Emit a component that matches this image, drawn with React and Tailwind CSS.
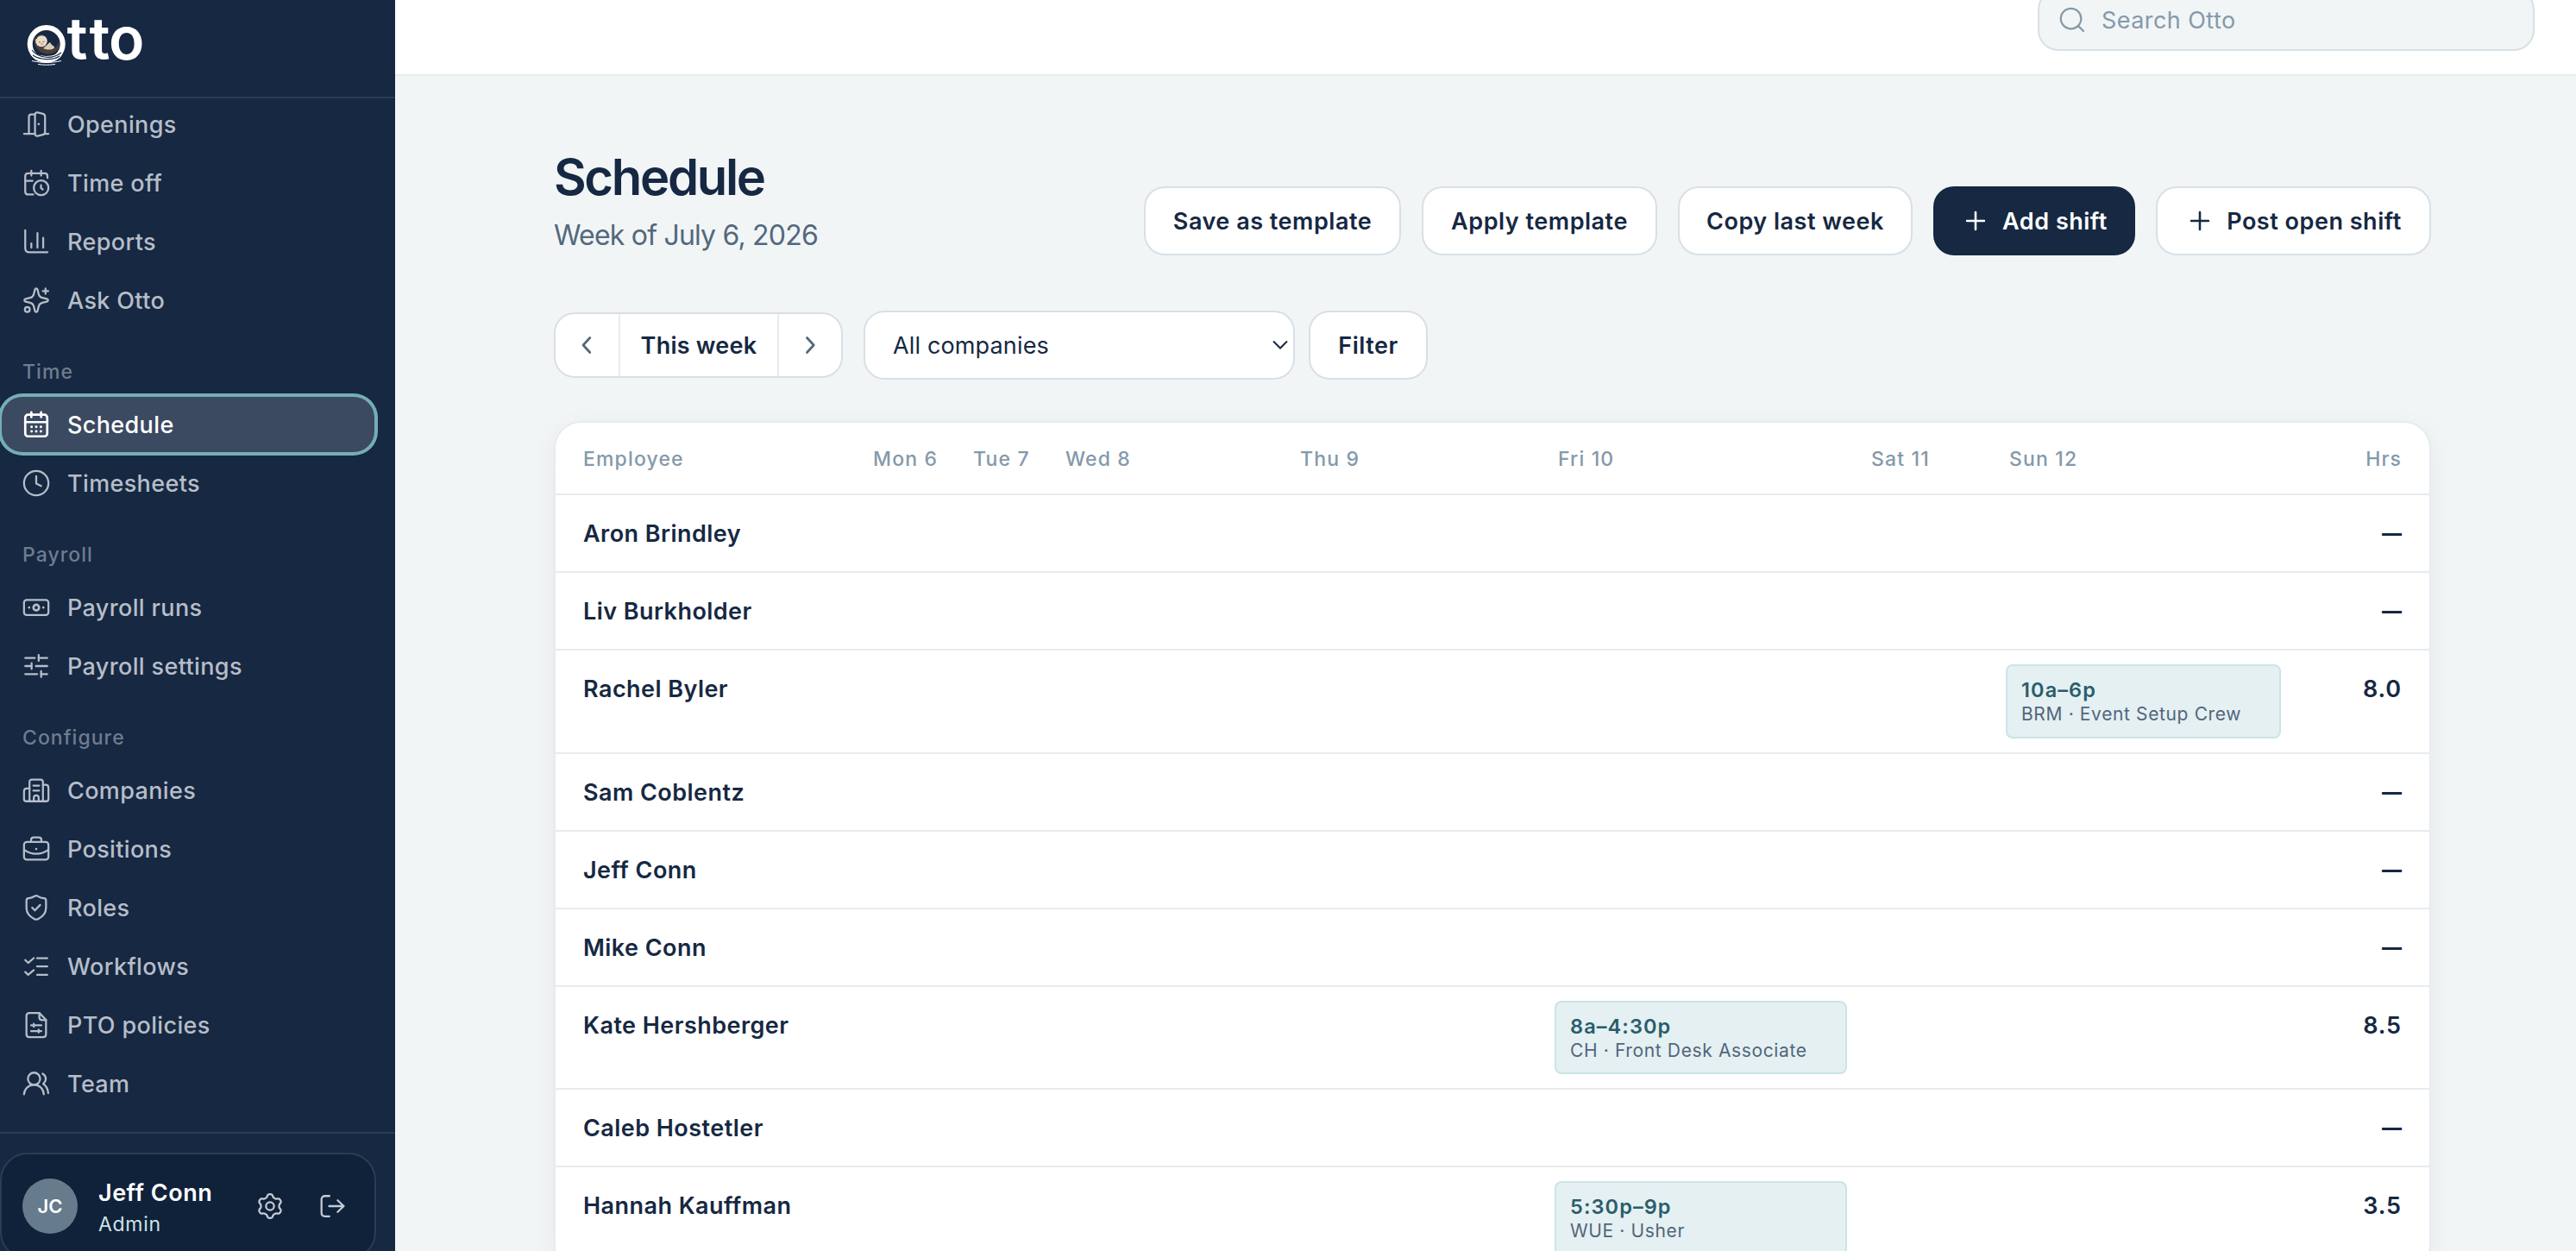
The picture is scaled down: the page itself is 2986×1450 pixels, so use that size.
import React, { useState } from 'react';

const Icon = ({ children, className = 'size-[34px]' }) => (
    <svg
        viewBox="0 0 24 24"
        fill="none"
        stroke="currentColor"
        strokeWidth="1.6"
        strokeLinecap="round"
        strokeLinejoin="round"
        className={`shrink-0 ${className}`}
    >
        {children}
    </svg>
);

// zero length strokes with round caps make the dots
const icons = {
    door: (
        <>
            <path d="M2 19.8h9M19.2 19.8H22" />
            <path d="M6 19.8V6c0-1.3.7-2 2-2h3" />
            <path d="M11 4.2c0-1.4.9-2.1 2.2-1.8l4.2 1c1.2.3 1.8 1 1.8 2.2v12.8c0 1.2-.6 1.9-1.8 2.2l-4.2 1c-1.3.3-2.2-.4-2.2-1.8z" />
            <path d="M14 11.9v.01" strokeWidth="1.9" />
        </>
    ),
    timeOff: (
        <>
            <path d="M8 2v4M16 2v4" />
            <path d="M21.2 8V6.5c0-1.5-.7-2.3-2.2-2.3H5.5C4 4.2 3 5 3 6.5V19c0 1.6.9 2.5 2.5 2.5h4" />
            <path d="M3 10.3h6" />
            <circle cx="16" cy="16" r="6" />
            <path d="M15.9 13.9v2.2l1.4 1.3" />
        </>
    ),
    chart: (
        <>
            <path d="M3 2.8v14.7c0 2.2 1.1 3.3 3.3 3.3h14.9" />
            <path d="M8 13.5V17M13 5v12M17.7 9v8" />
        </>
    ),
    sparkle: (
        <>
            <path d="M10.9 3.3c.3-1.3 1.9-1.3 2.2 0l.9 3.7c.4 1.6 1.4 2.6 3 3l3.7.9c1.3.3 1.3 1.9 0 2.2l-3.7.9c-1.6.4-2.6 1.4-3 3l-.9 3.7c-.3 1.3-1.9 1.3-2.2 0L10 17c-.4-1.6-1.4-2.6-3-3l-3.7-.9c-1.3-.3-1.3-1.9 0-2.2L7 10c1.6-.4 2.6-1.4 3-3z" />
            <circle cx="4.7" cy="19.6" r="2" />
            <path d="M19.6 2.3v4.4M17.4 4.5h4.4" />
        </>
    ),
    calendar: (
        <>
            <path d="M8 2v4M16 2v4" strokeWidth="1.9" />
            <rect x="3" y="4" width="18" height="17.7" rx="2.3" strokeWidth="1.9" />
            <path d="M3 10h18" strokeWidth="1.8" />
            <path d="M8.2 14v.01M12 14v.01M15.8 14v.01M8.2 17.6v.01M12 17.6v.01M15.8 17.6v.01" strokeWidth="2.1" />
        </>
    ),
    clock: (
        <>
            <circle cx="12" cy="12" r="10" />
            <path d="M12 6.3v6l4 2" />
        </>
    ),
    cash: (
        <>
            <rect x="2" y="5.9" width="20" height="12.4" rx="2.2" />
            <circle cx="12" cy="12.1" r="2.3" strokeWidth="1.9" />
            <path d="M6.2 12.1h.01M17.8 12.1h.01" strokeWidth="1.9" />
        </>
    ),
    sliders: (
        <>
            <path d="M3 5.4h7.8M14 5.4h7M3 12h5M11.7 12H21M3 18.6h9.8M16 18.6h5" />
            <path d="M14 3v4.8M8.2 9.6v4.8M16 16.2V21" />
        </>
    ),
    building: (
        <>
            <path d="M6.5 21V5.2c0-1.3.7-2 2-2h7c1.3 0 2 .7 2 2V21" />
            <path d="M6.5 10.5H4.3C2.9 10.5 2 11.3 2 12.8V19c0 1.3.7 2 2 2h16c1.3 0 2-.7 2-2V9.8c0-1.5-.9-2.3-2.3-2.3h-2.2" />
            <path d="M9.6 8.2h4.8M9.6 12.2h4.8" />
            <path d="M10 21v-3c0-1.2.7-1.9 2-1.9s2 .7 2 1.9v3" />
        </>
    ),
    briefcase: (
        <>
            <rect x="2" y="6.3" width="20" height="14.5" rx="2.3" />
            <path d="M7.8 6.2V4.6c0-1.3.7-2 2-2h4.4c1.3 0 2 .7 2 2v1.6" />
            <path d="M2 12.6c3 2.2 6.3 3.4 10 3.4s7-1.2 10-3.4" />
            <path d="M12 12v.01" strokeWidth="1.9" />
        </>
    ),
    shield: (
        <>
            <path d="M10.6 2.7c.9-.6 1.9-.6 2.8 0 1.4.9 3 1.5 4.9 1.7 1 .1 1.7.7 1.7 1.8v6c0 4.5-3 7.4-6.5 9.1-1 .5-2 .5-3 0C7 19.6 4 16.7 4 12.2v-6c0-1.1.7-1.7 1.7-1.8 1.9-.2 3.5-.8 4.9-1.7z" />
            <path d="M8.7 12l2.2 2.3 4.3-4.5" />
        </>
    ),
    checklist: (
        <>
            <path d="M3 6.9l2.4 2.3L10 5.3M3 16.7l2.4 2.3 4.6-3.9" />
            <path d="M12.7 5.4H21M12.7 12.1H21M12.7 19H21" />
        </>
    ),
    policy: (
        <>
            <path d="M14.5 2.2H6.4C4.9 2.2 4 3 4 4.6v14.9c0 1.6.9 2.4 2.4 2.4h11.2c1.5 0 2.4-.8 2.4-2.4V7.8z" />
            <path d="M14.5 2.4v3.2c0 1.6.8 2.4 2.4 2.4H20" />
            <path d="M7.8 12.3h8.4M7.8 17h8.4M10 11.1v2.4M14 15.8v2.4" />
        </>
    ),
    team: (
        <>
            <circle cx="10.2" cy="8" r="5" />
            <path d="M2 20.7c.4-4.4 3.7-7.7 8.2-7.7s7.7 3.3 8 7.7" />
            <path d="M17.2 3.9c3.3 1.9 3.5 5.5.5 8.3 2.4 1.6 3.9 4.1 4.1 7.6" />
        </>
    ),
    logout: (
        <>
            <path d="M9.8 3.7H6.2C4.4 3.7 3.3 4.6 3.3 6.5v11c0 1.9 1.1 2.8 2.9 2.8h3.6" />
            <path d="M9.5 12h12M16.5 7.2l5 4.8-5 4.8" />
        </>
    ),
    search: <path d="M17 17l4.2 4.2M19.3 11a8.3 8.3 0 1 1-16.6 0 8.3 8.3 0 0 1 16.6 0z" />,
    plus: <path d="M12 5v14M5 12h14" strokeWidth="1.8" />,
};

// six rounded teeth around the centre
const gearPath = Array.from({ length: 145 }, (_, i) => {
    const a = (i / 144) * Math.PI * 2 - Math.PI / 2;
    const wave = Math.cos(6 * (a + Math.PI / 2));
    const r = 8.6 + 1.25 * Math.tanh(1.6 * wave);
    return `${i ? 'L' : 'M'}${(12 + r * Math.cos(a)).toFixed(2)} ${(12 + r * Math.sin(a)).toFixed(2)}`;
}).join('') + 'Z';

const navGroups = [
    {
        items: [
            { label: 'Openings', icon: icons.door },
            { label: 'Time off', icon: icons.timeOff },
            { label: 'Reports', icon: icons.chart },
            { label: 'Ask Otto', icon: icons.sparkle },
        ],
    },
    {
        title: 'Time',
        items: [
            { label: 'Schedule', icon: icons.calendar },
            { label: 'Timesheets', icon: icons.clock },
        ],
    },
    {
        title: 'Payroll',
        items: [
            { label: 'Payroll runs', icon: icons.cash },
            { label: 'Payroll settings', icon: icons.sliders },
        ],
    },
    {
        title: 'Configure',
        items: [
            { label: 'Companies', icon: icons.building },
            { label: 'Positions', icon: icons.briefcase },
            { label: 'Roles', icon: icons.shield },
            { label: 'Workflows', icon: icons.checklist },
            { label: 'PTO policies', icon: icons.policy },
            { label: 'Team', icon: icons.team },
        ],
    },
];

const days = [
    { key: 'mon', label: 'Mon 6', width: 'w-[116px]' },
    { key: 'tue', label: 'Tue 7', width: 'w-[107px]' },
    { key: 'wed', label: 'Wed 8', width: 'w-[272px]' },
    { key: 'thu', label: 'Thu 9', width: 'w-[299px]' },
    { key: 'fri', label: 'Fri 10', width: 'w-[363px]' },
    { key: 'sat', label: 'Sat 11', width: 'w-[160px]' },
    { key: 'sun', label: 'Sun 12', width: 'w-[343px]' },
];

const employees = [
    { name: 'Aron Brindley' },
    { name: 'Liv Burkholder' },
    { name: 'Rachel Byler', hours: '8.0', shift: { day: 'sun', time: '10a–6p', role: 'BRM · Event Setup Crew' } },
    { name: 'Sam Coblentz' },
    { name: 'Jeff Conn' },
    { name: 'Mike Conn' },
    { name: 'Kate Hershberger', hours: '8.5', shift: { day: 'fri', time: '8a–4:30p', role: 'CH · Front Desk Associate' } },
    { name: 'Caleb Hostetler' },
    { name: 'Hannah Kauffman', hours: '3.5', shift: { day: 'fri', time: '5:30p–9p', role: 'WUE · Usher' } },
];

const Logo = () => (
    <svg viewBox="0 -20 160 90" className="h-[90px] w-[160px]" aria-label="Otto">
        <circle cx="23.7" cy="31" r="19" fill="#162842" stroke="#fff" strokeWidth="6" />
        {/* otter floating on its back */}
        <path d="M10 24c-1.5 9 5 19 17 18.5 8-.5 13-6 12-14.5-2 2-2 6-6 8-6 0-12-3-14-9z" fill="#4b4039" />
        <path d="M20 36c4-3 6-6 8-7 1 2 2 3 5 5 1 3-6 5-13 2z" fill="#d9cbb8" />
        <circle cx="18" cy="27.5" r="6.8" fill="#e9dcc7" />
        <path d="M12 25c1-4 5-5 9-4" stroke="#4b4039" strokeWidth="1.2" fill="none" />
        <path d="M15 28.5l2 .5M19.5 28.5l2-.5M17.5 31h2" stroke="#6b5a4b" strokeWidth=".9" />
        <path d="M4 37c7 10 31 11 40 0l-3 8c-5 6-11 7-17 7s-14-2-18-8z" fill="#fff" />
        <path d="M7 38c8 10 24 11 34 3M8 44c9 6 24 6 31 1" stroke="#162842" strokeWidth="1.2" fill="none" />
        <path d="M7 50.5c11 2.5 23 2.5 34 0M14 54.5c6 1 13 1 20 0" stroke="#fff" strokeWidth="1" fill="none" />
        <text x="47.5 73.5 96" y="49" fill="#fff" fontFamily="Inter, sans-serif" fontWeight="600" fontSize="68">tto</text>
    </svg>
);

const NavItem = ({ item, active, onSelect }) => (
    <button
        onClick={onSelect}
        className={
            active
                ? 'flex h-16 w-full items-center gap-[19px] rounded-3xl bg-[#3b4961] pl-[23px] text-white ring-4 ring-[#75aeb5]'
                : 'flex h-16 w-full items-center gap-[19px] rounded-3xl pl-[23px] text-[#b6bdc8]'
        }
    >
        <Icon>{item.icon}</Icon>
        <span className="pt-0.5 text-[27px] font-medium tracking-[0.36px]">{item.label}</span>
    </button>
);

const Sidebar = () => {
    const [current, setCurrent] = useState('Schedule');

    return (
        <aside className="flex h-full w-[458px] shrink-0 flex-col bg-[#162842]">
            <div className="h-[114px] shrink-0 border-b-2 border-[#2c3b57] pl-[30px]">
                <Logo />
            </div>
            <nav className="flex h-[1198px] shrink-0 flex-col pr-6 pl-0.5">
                {navGroups.map((group) => (
                    <div key={group.title || 'top'}>
                        {group.title && (
                            <p className="flex h-20 items-center pt-[22px] pl-6 text-[23px] font-medium tracking-[1.05px] text-[#6f7c8f]">
                                {group.title}
                            </p>
                        )}
                        <div className={group.title ? 'flex flex-col gap-1' : 'flex -mt-0.5 flex-col gap-1'}>
                            {group.items.map((item) => (
                                <NavItem
                                    key={item.label}
                                    item={item}
                                    active={item.label === current}
                                    onSelect={() => setCurrent(item.label)}
                                />
                            ))}
                        </div>
                    </div>
                ))}
            </nav>
            <div className="shrink-0 border-t-2 border-[#2c3b57] pt-[22px] pr-[22px]">
                <div className="flex h-[124px] items-center rounded-[32px] border-2 border-[#2c3b57] bg-[#10213a] pr-8 pl-6">
                    <span className="flex size-16 items-center justify-center rounded-full bg-[#667b8c] text-[22px] font-semibold text-white">
                        JC
                    </span>
                    <div className="ml-6 flex flex-col pt-[5px]">
                        <span className="text-[27px] leading-9 font-semibold tracking-[0.5px] text-white">Jeff Conn</span>
                        <span className="text-[23px] leading-9 tracking-[0.7px] text-[#cde5e6]">Admin</span>
                    </div>
                    <div className="ml-auto flex gap-[38px] text-[#c5cbd4]">
                        <Icon>
                            <path d={gearPath} />
                            <circle cx="12" cy="12" r="3.3" />
                        </Icon>
                        <Icon>{icons.logout}</Icon>
                    </div>
                </div>
            </div>
        </aside>
    );
};

const Button = ({ className, icon, children }) => (
    <button
        className={`flex h-20 shrink-0 items-center justify-center gap-[14px] rounded-3xl border-2 text-[27px] font-semibold tracking-[0.52px] whitespace-nowrap ${className}`}
    >
        {icon && <Icon>{icon}</Icon>}
        <span className="pt-0.5">{children}</span>
    </button>
);

const outline = 'border-[#d8e0e6] bg-white text-[#162842]';

const PageHeader = () => (
    <div className="flex items-end justify-between">
        <div>
            <h1 className="text-[58px] leading-16 font-semibold tracking-[-2.35px]">Schedule</h1>
            <p className="mt-3 text-[32px] leading-[47px] tracking-[-0.8px] text-[#53687c]">Week of July 6, 2026</p>
        </div>
        <div className="flex gap-6">
            <Button className={`w-[298px] ${outline}`}>Save as template</Button>
            <Button className={`w-[273px] ${outline}`}>Apply template</Button>
            <Button className={`w-[272px] ${outline}`}>Copy last week</Button>
            <Button className="w-[234px] border-[#162842] bg-[#162842] text-white" icon={icons.plus}>Add shift</Button>
            <Button className={`w-[319px] ${outline}`} icon={icons.plus}>Post open shift</Button>
        </div>
    </div>
);

const Toolbar = () => (
    <div className="mt-16 flex items-center">
        <div className="flex h-[76px] w-[335px] items-stretch rounded-3xl border-2 border-[#d8e0e6] bg-white">
            <button className="flex w-[73px] items-center justify-center text-[#53687c]">
                <Icon><path d="M14 6l-5.5 6 5.5 6" strokeWidth="1.9" /></Icon>
            </button>
            <button className="flex flex-1 items-center justify-center border-x-2 border-[#e6ecef] pt-0.5 text-[27px] font-semibold tracking-[0.25px]">
                This week
            </button>
            <button className="flex w-[72px] items-center justify-center text-[#53687c]">
                <Icon><path d="M9.5 6l5.5 6-5.5 6" strokeWidth="1.9" /></Icon>
            </button>
        </div>
        <button className="ml-6 flex h-20 w-[500px] items-center justify-between rounded-3xl border-2 border-[#d8e0e6] bg-white pr-1.5 pl-8">
            <span className="pt-0.5 text-[27px] tracking-[0.15px]">All companies</span>
            <svg viewBox="0 0 18 12" className="h-3 w-[18px]" fill="none" stroke="currentColor" strokeWidth="2">
                <path d="M1 1.5l8 8 8-8" />
            </svg>
        </button>
        <Button className={`ml-4 w-[138px] ${outline}`}>Filter</Button>
    </div>
);

const ShiftChip = ({ shift }) => (
    <div className="h-[85.5px] rounded-lg border-2 border-[#cce4e6] bg-[#e4f0f2] pt-3.5 pl-4 whitespace-nowrap">
        <p className="text-[23.5px] leading-7 font-semibold tracking-[1.1px] text-[#2a5d6b]">{shift.time}</p>
        <p className="text-[21px] leading-7 font-normal tracking-[0.63px] text-[#53657c]">{shift.role}</p>
    </div>
);

const ScheduleTable = () => (
    <div className="mt-12 overflow-hidden rounded-[32px] border-2 border-[#e6ecef] bg-white shadow-[0_8px_32px_rgba(22,40,66,0.05)]">
        <table className="w-full table-fixed border-separate border-spacing-0">
            <thead>
                <tr className="h-[84px] text-left text-[23px] tracking-[1.15px] text-[#8599ab]">
                    <th className="w-[352px] border-b-2 border-[#e6ecef] pt-0.5 pl-8 font-medium">Employee</th>
                    {days.map((day) => (
                        <th key={day.key} className={`border-b-2 border-[#e6ecef] pt-0.5 pl-4 font-medium whitespace-nowrap ${day.width}`}>
                            {day.label}
                        </th>
                    ))}
                    <th className="border-b-2 border-[#e6ecef] pt-0.5 pr-8 text-right font-medium">Hrs</th>
                </tr>
            </thead>
            <tbody>
                {employees.map((employee) => (
                    <tr key={employee.name} className={`align-top text-[27px] leading-10 font-semibold ${employee.shift ? 'h-[119.5px]' : 'h-[90px]'}`}>
                        <td className="border-b-2 border-[#e6ecef] pt-[25px] pl-8 tracking-[0.45px]">{employee.name}</td>
                        {days.map((day) => (
                            <td key={day.key} className="border-b-2 border-[#e6ecef] px-3 pt-4">
                                {employee.shift && employee.shift.day === day.key && <ShiftChip shift={employee.shift} />}
                            </td>
                        ))}
                        <td className={`border-b-2 border-[#e6ecef] pr-8 text-right ${employee.hours ? 'pt-[25px]' : 'pt-[23px]'}`}>
                            {employee.hours ? <span className="tracking-[0.9px]">{employee.hours}</span> : <span className="text-[23px] font-extrabold">—</span>}
                        </td>
                    </tr>
                ))}
            </tbody>
        </table>
    </div>
);

const App = () => {
    return (
        <div className="flex h-[1450px] w-[2986px] overflow-hidden bg-[#f1f5f6] font-[Inter,sans-serif] text-[#162842]">
            <Sidebar />
            <main className="flex min-w-0 flex-1 flex-col">
                <header className="flex h-[88px] shrink-0 items-end justify-end border-b-2 border-[#e6ecef] bg-white pr-12">
                    <label className="mb-[27px] flex h-[72px] w-[576px] shrink-0 items-center gap-[17px] rounded-3xl border-2 border-[#d8e0e6] bg-[#f1f5f6] pl-[21px] text-[#8599ab]">
                        <Icon>{icons.search}</Icon>
                        <span className="pt-[3px] text-[27px] tracking-[0.44px]">Search Otto</span>
                    </label>
                </header>
                <div className="w-[2360px] pt-[85px] pl-[184px]">
                    <PageHeader />
                    <Toolbar />
                    <ScheduleTable />
                </div>
            </main>
        </div>
    );
};

export default App;
